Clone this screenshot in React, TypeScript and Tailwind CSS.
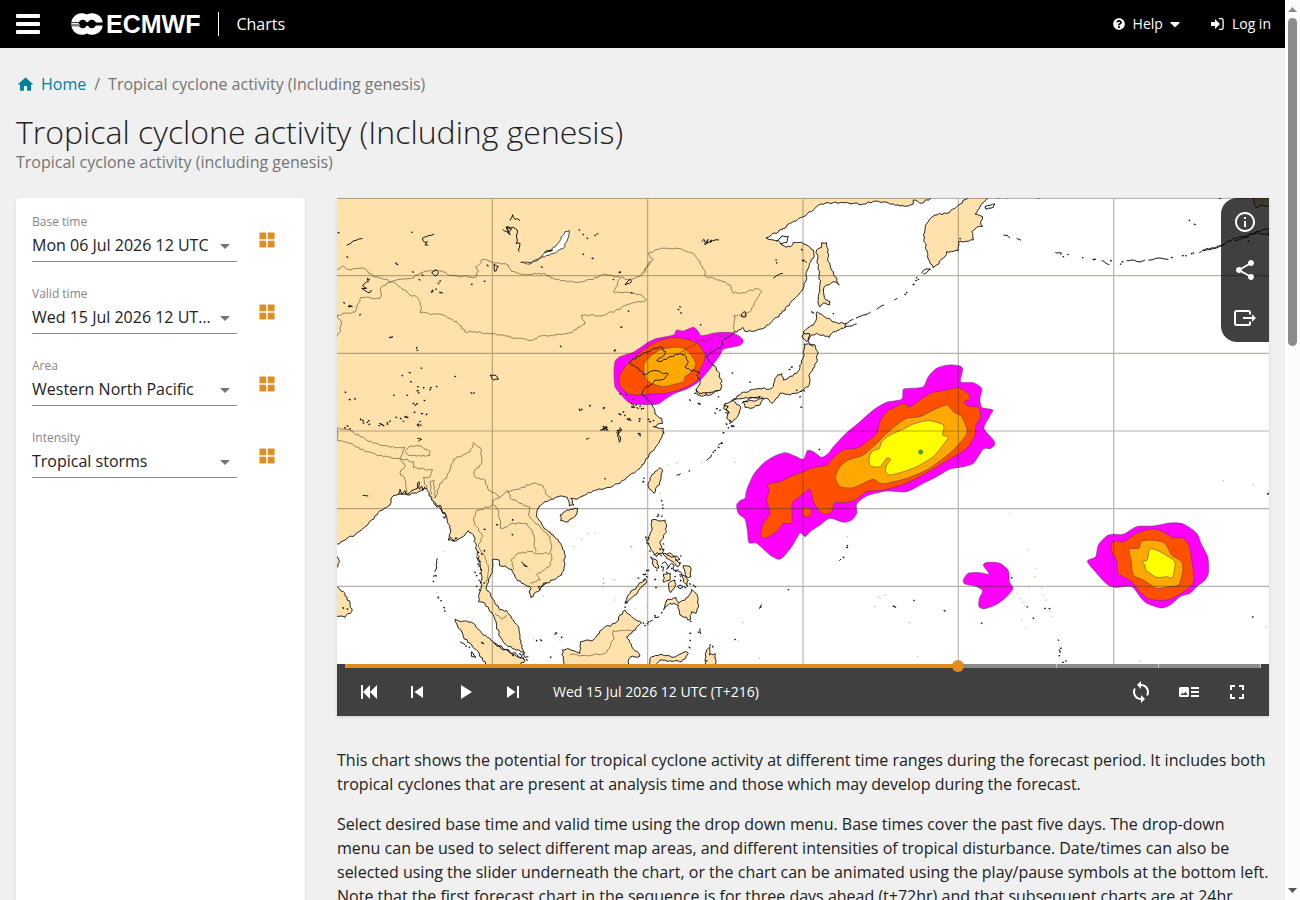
import { useState, type ReactNode } from 'react';
import {
  MdFullscreen,
  MdHome,
  MdInfoOutline,
  MdPlayArrow,
  MdShare,
  MdSkipNext,
  MdSkipPrevious,
  MdSync,
} from 'react-icons/md';
import { FaCaretDown, FaQuestionCircle } from 'react-icons/fa';

/* ---------- Map geometry ---------- */

type Point = [number, number];

// Map sheets: each coordinate list is relative to the origin of its sheet.
const NW: Point = [-21, -24];
const N: Point = [789, -24];
const SW: Point = [-21, 666];
const S: Point = [789, 666];
const NE: Point = [1719, -24];
const SE: Point = [1809, 846];
const MID: Point = [1149, 456];

const pts = (origin: Point, list: string): Point[] =>
  list
    .trim()
    .split(/\s+/)
    .map((pair) => {
      const [x, y] = pair.split(',').map(Number);
      return [x + origin[0], y + origin[1]];
    });

const noise = (x: number, y: number) => {
  const v = Math.sin(x * 12.9898 + y * 78.233) * 43758.5453;
  return (v - Math.floor(v)) * 2 - 1;
};

// Builds an irregular coast-like path through the given points.
const trace = (points: Point[], amp: number, closed: boolean) => {
  const out: string[] = [];
  const last = closed ? points.length : points.length - 1;
  for (let i = 0; i < last; i++) {
    const [x1, y1] = points[i];
    const [x2, y2] = points[(i + 1) % points.length];
    const len = Math.hypot(x2 - x1, y2 - y1) || 1;
    const steps = Math.max(1, Math.round(len / 7));
    const straight = len > 700;
    for (let k = 0; k < (straight ? 1 : steps); k++) {
      const t = k / steps;
      const off = k === 0 || straight ? 0 : noise(x1 + k * 3, y1 + k * 7) * amp;
      const x = x1 + (x2 - x1) * t - ((y2 - y1) / len) * off;
      const y = y1 + (y2 - y1) * t + ((x2 - x1) / len) * off;
      out.push(`${x.toFixed(1)} ${y.toFixed(1)}`);
    }
  }
  if (!closed) out.push(points[points.length - 1].join(' '));
  return `M${out.join('L')}${closed ? 'Z' : ''}`;
};

// Smooth closed outline through the given points.
const smooth = (p: Point[]) => {
  const n = p.length;
  let d = `M${p[0].join(' ')}`;
  for (let i = 0; i < n; i++) {
    const a = p[(i + n - 1) % n];
    const b = p[i];
    const c = p[(i + 1) % n];
    const e = p[(i + 2) % n];
    d += `C${b[0] + (c[0] - a[0]) / 8} ${b[1] + (c[1] - a[1]) / 8} ${c[0] - (e[0] - b[0]) / 8} ${c[1] - (e[1] - b[1]) / 8} ${c[0]} ${c[1]}`;
  }
  return `${d}Z`;
};

const coast: Point[] = [
  ...pts(NE, '62,24 35,40 10,30'),
  ...pts(
    N,
    '940,42 925,48 900,48 880,42 850,36 820,34 790,42 750,41 700,38 662,42 640,60 610,80 575,98 545,118 515,134 498,143 520,150 535,152 545,165 558,172 572,170 580,157 605,157 620,165 640,180 640,205 628,220 622,240 620,262 612,290 595,315 570,340 545,370 515,395 490,415 460,424 435,424 428,412 415,420 400,430 385,440 370,450 365,468 330,490 318,500 335,520 355,545 365,575 362,600 340,610 310,618 292,615 288,600 298,585 300,570 290,555 295,545 270,540 255,530 265,515 258,500 240,490 210,500 180,515 170,512 190,498 197,485 180,470 160,475 130,490 95,512 88,520 115,535 130,555 150,545 165,542 205,552 195,565 170,570 150,585 130,600 125,612 145,630 158,650 165,672 185,685 188,700 160,710 190,715 192,730',
  ),
  ...pts(S, '190,35 180,60 165,85'),
  ...pts(
    SW,
    '957,105 945,125 930,145 900,165 870,190 830,203 800,210 770,222 735,237 722,235 732,255 718,258 712,232 690,228 665,238 645,245 625,265 620,290 640,320 670,345 692,370 703,400 703,440 695,465 670,480 645,492 630,510 602,532 600,500 575,490 555,470 545,448 525,438 508,436 507,420 488,418 488,455 475,480 468,505 482,520 495,550 510,570 530,572 550,600 567,625 570,650 572,670 585,700 560,690 530,675 510,650 500,620 492,590 480,575 465,550 445,545 450,515 455,480 450,430 440,390 432,350 415,332 405,345 380,362 355,360 362,330 350,290 330,265 305,240 290,205 265,215 240,225 210,222 185,232 180,255 150,272 125,300 100,325 75,345 45,360 22,372',
  ),
];
const mainland: Point[] = [[-20, -20], [1781, -20], ...coast, [-20, 1038]];

const islands: Point[][] = [
  pts(N, '650,180 665,172 665,158 680,158 685,180 683,205 695,240 718,285 700,275 680,285 670,300 678,330 690,335 688,345 672,338 658,350 655,320 660,280 655,230 652,210'),
  pts(N, '652,365 680,385 710,398 740,400 730,415 700,425 688,442 650,430 630,440 620,455 608,445 610,425 640,405 650,385'),
  pts(N, '612,462 645,465 655,490 645,530 630,550 625,590 600,605 570,615 540,610 515,640 500,625 475,620 430,625 395,632 425,608 470,597 515,595 530,560 545,550 550,570 590,550 605,520 612,480'),
  pts(N, '430,635 455,632 492,626 480,645 450,655 435,652'),
  pts(N, '375,640 400,632 422,650 415,675 395,698 380,685 385,665 370,655'),
  pts(NE, '175,20 140,50 110,70 75,75 50,100 40,135 50,180 60,220 70,234 105,200 110,185 145,182 145,155 190,150 185,125 200,112 218,110 212,95 218,80 195,72 210,50 235,20'),
  pts(NE, '1030,20 1090,20 1090,52 1060,46 1040,54 1032,40'),
  pts(S, '165,155 180,143 188,150 182,180 163,220 145,200 150,175'),
  pts(SW, '690,285 710,270 742,265 738,285 715,305 692,302'),
  pts(S, '155,300 195,300 200,335 180,365 190,395 170,410 140,370 150,345 155,320'),
  pts(S, '152,410 172,425 175,445 160,435'),
  pts(S, '188,400 215,402 240,430 235,440 200,415'),
  pts(S, '250,437 270,440 273,470 258,470'),
  pts(S, '190,462 212,460 210,480 192,488'),
  pts(S, '205,490 225,480 225,500 212,518'),
  pts(S, '247,465 265,480 262,500 250,485'),
  pts(S, '190,570 200,540 228,533 235,550 265,530 275,508 292,525 296,560 288,580 275,575 270,600 240,585 235,555 210,550'),
  pts(S, '75,550 85,525 135,475 140,485 105,525'),
  pts(SW, '697,690 720,688 750,700 752,665 790,660 820,625 855,610 885,570 905,590 935,608 905,640 890,650 905,680 930,708 900,712 890,745 700,745'),
  pts(S, '145,745 150,715 180,703 220,712 260,695 265,700 245,725 180,720 160,745'),
  pts(S, '315,735 320,690 330,680 328,705 345,700 345,735'),
  pts(SW, '375,598 430,610 460,645 490,665 530,690 560,710 585,720 560,745 475,745 440,690 400,650'),
  pts(SW, '10,500 28,506 40,515 60,550 65,575 45,592 15,588'),
  pts(SW, '15,400 22,410 29,425 24,440 15,445'),
];

const lake = pts(NW, '572,217 600,218 635,200 645,185 665,178 685,160 705,125 718,122 712,150 700,175 670,190 630,205 600,222');

const borders: Point[][] = [
  pts(NW, '21,238 40,228 60,240 100,235 130,258 160,268 185,275 210,268 245,265 270,250 300,240 340,245 360,257 400,258 435,262 445,245 437,230 460,208 500,218 535,225 545,245 580,252 640,250 670,265 700,272 740,277 790,268 820,252 850,258 900,268 935,255 960,215'),
  pts(N, '130,250 160,208 145,190 175,178 230,175 280,190 300,215 320,262 360,270 390,285 400,310 440,306 470,296 486,305 470,330 455,360 430,378 402,376 402,400 405,425 395,432'),
  pts(NW, '21,376 50,370 75,367 92,322 150,325 155,290 185,275 200,283 235,310 265,325 275,350 270,368 340,375 380,395 405,425 490,430 540,440 600,451 640,437 710,432 740,418 765,402 755,375 810,378 870,358 890,345 930,335 950,330 935,315 900,308 870,308 850,305 870,265'),
  pts(NW, '21,376 35,400 27,430 21,440'),
  pts(SW, '21,25 60,30 90,50 130,70 180,82 225,82 210,115 160,110 110,95 60,70 21,60 21,25'),
  pts(SW, '225,95 240,78 270,78 300,95 300,106 260,108 235,106 225,95'),
  pts(SW, '212,115 250,125 250,142 308,150 300,170 280,172 290,205'),
  pts(SW, '212,115 225,140 210,158 225,180 230,220'),
  pts(SW, '305,240 300,185 312,180 315,235 330,190 350,175 370,118 420,95 430,68 455,90 455,130 432,155 435,170 465,180 475,210 510,232 490,240 488,255 440,272 430,300 440,320 458,350 445,375 465,410 475,440 468,490'),
  pts(SW, '510,232 530,215 560,208 610,190 640,198 650,225 665,238'),
  pts(SW, '530,210 545,238 570,250 600,262 595,285 630,320 660,350 665,380 660,400 620,400 600,395 560,402 543,420 550,450'),
  pts(SW, '490,255 505,270 512,325 550,310 590,310 608,335 618,395'),
  pts(SW, '663,400 662,435 620,465 630,480 600,490'),
  pts(SW, '495,580 515,598 530,585'),
  pts(SW, '720,705 770,707 825,700 850,660 850,632 905,632'),
  pts(N, '240,490 300,450 320,455 355,432 365,440 385,432'),
];

const squiggles: Point[][] = [
  pts(NW, '518,118 530,125 540,135 530,110 545,118 535,128 528,112 550,112 562,120 560,135 562,150 558,160 570,160 565,180 568,185'),
  pts(NW, '540,92 548,74 555,88 562,86 570,92'),
  pts(NW, '50,165 75,152 97,146'),
  pts(NW, '312,132 290,140 277,145 285,158 292,155 285,165 295,165'),
  pts(NW, '120,270 112,265 115,275 105,280 98,286 110,295 95,295 106,302 120,308 125,300'),
  pts(NW, '305,248 318,240 325,250 315,258 305,248'),
  pts(NW, '495,245 492,222 505,230 497,245'),
  pts(NW, '480,555 495,555 505,568 490,570 480,555'),
  pts(NW, '885,285 905,275 900,268 885,285'),
  pts(NW, '645,188 668,180 655,184'),
  pts(N, '305,155 312,148 315,165 325,148 322,160 335,150 330,158 345,150 357,150'),
  pts(N, '520,265 535,255 548,250'),
  pts(N, '425,372 435,365 438,380 425,380 425,372'),
  pts(N, '530,155 545,138 565,140 560,158 540,160'),
  pts(N, '735,402 760,388'),
  pts(N, '768,384 790,375 812,366'),
  pts(N, '830,358 852,345'),
  pts(N, '735,412 770,402'),
  pts(N, '883,330 892,325'),
  pts(N, '612,430 630,432 625,455 640,470'),
  pts(N, '370,645 385,650 378,660 388,668 375,668'),
  pts(N, '425,640 450,625 480,622'),
  pts(N, '288,600 300,612 320,608 340,606 355,602'),
  pts(NE, '225,50 255,42 250,52 228,58 225,50'),
  pts(NE, '280,135 292,136 300,144'),
  pts(NE, '320,146 333,151'),
  pts(NE, '436,188 455,190 450,194'),
  pts(NE, '650,212 665,210 680,214 690,216 705,210'),
  pts(NE, '715,210 745,204 775,208'),
  pts(NE, '868,188 890,175 900,180 915,175 925,168 945,162 925,172 900,176 880,182'),
  pts(NE, '945,158 975,145 1010,138 1040,125 1077,115 1077,135 1040,128 1010,142 975,152'),
  pts(NE, '575,212 598,224'),
  pts(NE, '35,250 45,238 62,238 40,252'),
  pts(SW, '322,415 320,440 314,455'),
  pts(SW, '390,665 405,675'),
  pts(SW, '425,695 438,712 425,710 425,695'),
  pts(SW, '575,425 592,440 580,435'),
  pts(SW, '262,55 275,58 265,64'),
  pts(SW, '98,226 115,228'),
  pts(S, '320,122 332,112 335,104'),
  pts(S, '355,75 368,70'),
  pts(S, '230,165 242,161'),
  pts(S, '478,566 485,553'),
  pts(S, '718,422 723,417'),
  pts(S, '300,625 302,642'),
  pts(S, '150,605 158,600'),
  pts(S, '163,592 178,590'),
  pts(S, '185,432 195,425 205,440 200,448 215,430 222,438 220,450 235,450 225,455'),
  pts(S, '190,440 188,455'),
  pts(S, '232,500 240,506 250,500 240,495 232,500'),
  pts(S, '200,405 215,412 230,408 240,418 225,420'),
  pts(S, '235,455 246,460 242,472'),
  pts(S, '160,405 172,398 186,408'),
  pts(S, '55,40 65,28 50,38 62,55 57,68'),
  pts(S, '0,30 12,26 20,20 14,32 10,28'),
  pts(SW, '815,30 828,20 835,32'),
  pts(SW, '860,32 870,30 862,48 870,65'),
  pts(SW, '768,58 778,54'),
  pts(SW, '490,668 500,678 510,680 520,690 530,688 545,700 555,698 570,715 580,700 585,712 595,710'),
  pts(SW, '440,410 446,425'),
  pts(SW, '205,222 210,208 215,222 225,212 228,222 240,218 250,210 262,205 262,190 267,185 268,208 275,198 278,212 285,200'),
  pts(SW, '310,245 322,262 330,255 338,280 345,278 345,295 338,290'),
  pts(SW, '355,360 362,352 370,364 378,352 385,360'),
  pts(SW, '630,510 625,500 638,498 640,490 650,488'),
];

// Centres of small lakes and islets.
const specks: Point[] = [
  ...pts(NW, '25,128 245,126 52,199 198,218 202,222 472,224 248,246 268,268 277,253 425,284 463,274 330,275 325,278 308,300 318,296 305,304 330,306 335,310 42,337 60,345 64,350 56,348 90,376 186,443 180,444 260,472 262,480 692,467 853,482 875,412 895,362 635,229 760,191 787,207 772,143 802,133 748,121 795,135 760,132 238,547 274,535 217,558 242,574 264,590 262,604 266,610 281,593 302,595 320,588 231,615 192,615 300,600 375,560 424,607 432,608 46,605 58,629 75,625 250,642 260,642 255,645 283,632 253,667 275,672 92,686 98,690 116,692 118,705 150,700 153,703 172,698 180,695 198,680 212,684 225,680 232,684 228,678 220,694 262,705 272,704 266,708 290,675 155,704 45,712 60,715 748,658 755,656 750,662 780,645 820,653 868,670 880,668 892,686 905,640 912,650 918,645 908,652 935,655 898,685 928,688 825,712 820,708 830,715 870,715 850,268 870,245 905,308'),
  ...pts(N, '63,413 85,362 235,357 240,350 243,367 302,404 58,246 40,268 45,482 528,210 530,220 605,177 608,210 618,216 612,213 60,613 78,615 100,628 95,650 100,646 108,645 112,652 120,650 130,655 12,655 62,672 75,678 85,688 90,690 118,692 145,688 148,694 150,695 160,690 10,715 15,712 20,718 55,722 118,730 270,628 295,642 300,644 285,610 318,610 355,622 450,578 397,548 568,538 575,533 635,365 640,370 590,600 603,605 603,650 700,372 360,662 350,658 345,668 385,715 395,708 390,700 400,706 600,622 612,600 370,730 365,760 355,770 915,312 920,308 940,285 948,272 955,270 950,265'),
  ...pts(NE, '838,90 853,102 518,203 474,194 460,200 550,210 555,208 603,210 632,224 637,216 785,204 818,198 828,196 845,190 850,188 292,24 385,24 265,24 930,26 150,145 1015,155'),
  ...pts(SW, '100,10 112,8 160,15 172,12 265,12 270,5 52,17 147,17 825,175 845,5 925,42 930,45 940,185 547,342 548,298 463,328 500,315 463,390 318,465 312,470 310,485 325,530 333,542 342,562 344,572 435,455 440,468 445,430 450,460 448,440 452,450 455,400 462,490 440,500 448,508 447,480 452,485 450,425 445,395 620,660 632,658 678,637 675,642 695,650 662,710 570,700 580,712 590,718 548,705 535,690 460,670 455,668 40,562 52,565 408,680 418,682 948,350 955,370 950,450 940,462 950,470 925,475 890,545 885,560 940,610 955,605'),
  ...pts(S, '120,40 132,175 130,187 185,240 188,255 188,265 175,282 172,290 185,290 268,153 345,92 340,98 380,10 395,20 390,5 742,376 740,382 730,410 658,90 565,510 482,560 885,560 942,541 880,560 405,660 272,605 270,640 270,660 268,680 338,678 330,675 320,725 295,635 145,352 140,360 150,395 145,450 135,465 130,480 165,480 168,500 135,618 142,610 165,585 185,580 215,445 225,470 200,455 240,465 242,480 270,490 280,495 285,500 170,450 185,440 180,385 190,390 242,408 240,430 255,500 190,372'),
  ...pts(SE, '215,292 262,380 280,413 315,386 328,387 13,391 125,428 355,480 358,510 362,505 360,518 358,528 368,546 378,544 938,412 985,41 983,44'),
];

// Barely visible reefs and atolls.
const reefs: Point[] = [
  ...pts(SW, '775,340 795,340 755,358 730,380 902,380 320,518 340,395 820,475 850,478 822,490 818,500 600,450 640,528 855,540 950,560 610,655 690,660'),
  ...pts(S, '180,220 205,135 230,130 305,128 405,128 665,100 640,155 742,310 742,350 730,250 430,608 835,530 840,535 825,560 928,608 953,710 415,663 478,715 105,565 95,380 45,480 10,490 855,525'),
  ...pts(SE, '210,102 265,211 290,265 285,290 268,322 255,378 335,410 245,420 258,445 978,441 940,14 600,545 310,345 305,325 232,340 240,355 248,368 330,395 318,360 850,2'),
];

const speckPath = specks
  .map(([x, y]) => {
    const a = noise(x, y) * 3;
    const b = noise(y, x) * 3;
    return `M${x - 2} ${y}l3 ${a.toFixed(1)}l${b.toFixed(1)} 2`;
  })
  .join('');

const reefPath = reefs.map(([x, y]) => `M${x - 2} ${y}h4`).join('');

const MAGENTA = '#ff00ff';
const RED = '#ff5000';
const AMBER = '#ffa800';
const YELLOW = '#ffff00';

const contours: { fill: string; points: Point[] }[] = [
  {
    fill: MAGENTA,
    points: pts(N, '45,515 60,500 100,487 140,460 165,447 220,435 230,420 250,423 280,412 295,425 305,437 350,428 395,428 420,440 430,453 420,466 395,472 370,478 360,495 335,530 310,560 290,580 260,597 225,610 195,628 170,643 100,642 80,632 60,610 45,590 42,550'),
  },
  {
    fill: RED,
    points: pts(N, '58,560 75,530 100,505 130,480 160,460 195,447 230,443 270,450 295,462 305,475 315,495 310,520 298,545 300,560 280,580 245,597 205,608 150,612 100,615 75,605 60,585'),
  },
  {
    fill: AMBER,
    points: pts(N, '133,520 150,500 175,482 200,475 240,472 265,485 280,505 287,525 270,550 255,560 250,575 215,585 190,590 160,582 140,570 132,545'),
  },
  {
    fill: MAGENTA,
    points: pts(MID, '50,465 60,452 75,445 80,420 100,375 130,340 160,320 195,308 225,318 250,328 262,302 280,305 305,322 325,310 340,290 380,248 420,215 460,180 500,157 545,148 550,118 575,115 610,110 625,80 650,55 685,45 720,48 728,60 722,95 760,98 785,115 780,145 785,172 818,180 808,200 792,235 820,270 824,285 810,296 790,297 760,340 730,350 690,357 650,380 610,400 560,425 500,423 440,438 410,462 410,490 395,510 370,517 330,505 300,525 270,545 255,560 240,550 215,590 190,620 175,628 150,615 110,580 87,578 82,540 75,508 55,490'),
  },
  {
    fill: RED,
    points: pts(MID, '150,400 180,395 210,380 250,365 285,352 320,345 345,318 375,298 410,295 440,275 470,250 480,215 500,185 525,172 550,160 570,170 600,150 635,128 680,120 715,113 745,130 750,148 733,155 745,168 775,172 782,200 768,225 765,255 745,290 710,315 660,345 600,380 545,405 490,420 440,425 405,450 375,458 345,458 335,485 318,493 300,485 280,455 270,418 240,440 217,460 215,518 190,520 170,545 135,565 122,555 130,520 150,490 140,450 148,420 142,408'),
  },
  {
    fill: AMBER,
    points: pts(MID, '347,378 360,350 385,330 430,315 470,280 500,250 530,225 560,205 600,200 640,180 680,165 700,185 725,200 740,235 738,255 710,290 670,325 620,360 560,385 500,400 480,400 460,388 430,400 400,413 365,412 350,395'),
  },
  {
    fill: YELLOW,
    points: pts(MID, '447,330 455,305 478,295 485,275 510,255 550,238 580,222 625,212 670,225 668,255 685,262 665,290 640,320 590,350 550,365 510,375 497,365 500,345 512,328 500,325 480,350 452,348'),
  },
  { fill: RED, points: pts(MID, '246,487 252,474 262,471 272,476 275,488 268,499 255,500') },
  {
    fill: MAGENTA,
    points: pts(SE, '70,300 85,280 120,278 147,282 130,255 145,247 180,250 205,272 208,305 219,325 200,350 170,373 135,386 117,380 118,355 128,332 105,318 75,312'),
  },
  {
    fill: MAGENTA,
    points: pts(SE, '442,244 467,230 475,195 500,168 520,163 550,163 590,140 640,138 690,129 730,132 770,160 785,195 803,230 806,275 795,300 770,320 750,340 720,350 690,375 663,384 620,370 600,350 575,320 525,322 500,312 470,280'),
  },
  {
    fill: RED,
    points: pts(SE, '515,190 530,182 550,186 590,160 635,147 670,155 695,172 730,175 748,200 755,240 762,300 745,325 715,345 680,360 630,358 600,335 575,305 535,280 530,240 515,215'),
  },
  {
    fill: AMBER,
    points: pts(SE, '568,207 597,205 605,183 640,181 675,190 695,225 725,245 728,275 715,315 685,320 650,325 610,300 580,285 573,240'),
  },
  {
    fill: YELLOW,
    points: pts(SE, '605,245 622,240 630,207 660,215 700,240 705,255 697,293 680,290 650,292 618,270 615,255'),
  },
];

const mainlandPath = trace(mainland, 3, true);
const coastPath = trace(coast, 3, false);
const islandPath = islands.map((p) => trace(p, 3, true)).join('');
const borderPath = borders.map((p) => trace(p, 3, false)).join('');
const squigglePath = squiggles.map((p) => trace(p, 2, false)).join('');

function CycloneMap() {
  return (
    <svg viewBox="0 0 2796 1398" className="block w-full bg-white" role="img" aria-label="Tropical cyclone activity map">
      <g fill="#ffe2ab">
        <path d={mainlandPath} />
        <path d={islandPath} stroke="#222" strokeWidth="3" />
      </g>
      <path d={trace(lake, 2, true)} fill="#fff" stroke="#444" strokeWidth="3" />
      {contours.map((c, i) => (
        <path key={i} d={smooth(c.points)} fill={c.fill} stroke="#5b3060" strokeOpacity="0.7" strokeWidth="2.2" />
      ))}
      <circle cx="1751" cy="762" r="6" fill="#14c814" stroke="#333" strokeWidth="1.5" />
      <g fill="none" strokeLinejoin="round">
        <path d={borderPath} stroke="#5c4a2e" strokeOpacity="0.8" strokeWidth="2.4" />
        <path d={coastPath} stroke="#222" strokeWidth="3" />
        <path d={squigglePath} stroke="#111" strokeWidth="3" />
        <path d={speckPath} stroke="#111" strokeWidth="3.5" />
        <path d={reefPath} stroke="#222" strokeOpacity="0.5" strokeWidth="2" />
        <path
          d="M0 1H2796M0 233H2796M0 466H2796M0 699H2796M0 932H2796M0 1165H2796M466 0V1398M932 0V1398M1398 0V1398M1864 0V1398M2330 0V1398"
          stroke="#2a2010"
          strokeOpacity="0.34"
          strokeWidth="3.5"
        />
      </g>
    </svg>
  );
}

/* ---------- Icons ---------- */

function LogoMark() {
  return (
    <svg width="32" height="22" viewBox="0 0 32 22" aria-hidden="true">
      <path
        fill="#fff"
        d="M10.800.2C12.800.2 14.600.8 16 1.600 17.400.8 19.200.2 21.200.2c4.700 0 8.700 3 10.200 7.200v7.200c-1.500 4.200-5.500 7.200-10.200 7.200-2 0-3.800-.6-5.200-1.400-1.400.8-3.200 1.400-5.200 1.400C4.900 21.800.2 17 .2 11S4.900.2 10.800.2z"
      />
      <g fill="#000">
        <circle cx="11.800" cy="11" r="4.200" />
        <circle cx="20.800" cy="11" r="4.200" />
        <path d="M15 9.200h3v3.600h-3zM23 9.500h9v3h-9zM0 9.200h9v.9H0zM0 12.400h9v.9H0z" />
      </g>
      <path fill="#fff" d="M14.300 5.500h3.600L16.100 9zM14.300 16.500h3.600L16.100 13z" />
      <path fill="#888" d="M0 10.900h9v1.500H0z" />
    </svg>
  );
}

function SignInIcon() {
  return (
    <svg width="13" height="12" viewBox="0 0 13 12" aria-hidden="true">
      <path fill="#fff" d="M0 3.900h4V1l5 5-5 5V8.100H0z" />
      <path fill="none" stroke="#fff" strokeWidth="1.300" d="M8 .7h2.500q1.600 0 1.600 1.600v7.400q0 1.600-1.600 1.600H8" />
    </svg>
  );
}

function GridIcon() {
  return (
    <svg width="16" height="16" viewBox="0 0 16 16" fill="#e08d22" aria-hidden="true">
      <path d="M.5.5h6.700v6.700H.5zM8.800.5h6.700v6.700H8.800zM.5 8.800h6.700v6.700H.5zM8.800 8.800h6.700v6.700H8.800z" />
    </svg>
  );
}

function FirstIcon() {
  return (
    <svg width="24" height="24" viewBox="0 0 24 24" fill="currentColor" aria-hidden="true">
      <path d="M4 5h2v14H4zM13 5v14l-7-7zM20 5v14l-7-7z" />
    </svg>
  );
}

function LegendIcon() {
  return (
    <svg width="24" height="24" viewBox="0 0 24 24" fill="currentColor" aria-hidden="true">
      <path fillRule="evenodd" d="M3.500 7h7A1.500 1.500 0 0 1 12 8.500v7a1.500 1.500 0 0 1-1.500 1.500h-7A1.500 1.500 0 0 1 2 15.500v-7A1.500 1.500 0 0 1 3.500 7zM3.500 15h7.200L8.500 11.800l-1.700 2.100-1.200-1.300z" />
      <path d="M14 7h8v2h-8zM14 11h8v2h-8zM14 15h8v2h-8z" />
    </svg>
  );
}

function ExportIcon() {
  return (
    <svg width="24" height="24" viewBox="0 0 24 24" fill="none" stroke="currentColor" strokeWidth="2" aria-hidden="true">
      <path d="M17 8.500V6.500Q17 5 15.500 5h-12Q2 5 2 6.500v11Q2 19 3.500 19h12q1.500 0 1.500-1.500v-2" />
      <path d="M10 12h10" />
      <path fill="currentColor" stroke="none" d="M19 8.200 23 12l-4 3.800z" />
    </svg>
  );
}

/* ---------- Page ---------- */

function Header() {
  return (
    <header className="flex h-12 items-center bg-black px-4 text-white">
      <button type="button" aria-label="Menu" className="flex w-6 flex-col gap-1">
        <span className="h-1 w-full rounded-[1px] bg-white" />
        <span className="h-1 w-full rounded-[1px] bg-white" />
        <span className="h-1 w-full rounded-[1px] bg-white" />
      </button>
      <a href="#" className="ml-[31px] flex items-center gap-[3px]">
        <LogoMark />
        <span className="font-['Liberation_Sans',sans-serif] text-[25px] leading-6 font-bold">ECMWF</span>
      </a>
      <span className="ml-[18px] h-6 w-px bg-white" />
      <a href="#" className="ml-[17px] text-base">
        Charts
      </a>
      <nav className="-mr-0.5 ml-auto flex items-center gap-7 text-sm">
        <button type="button" className="flex items-center gap-2">
          <FaQuestionCircle size={12} />
          <span className="flex items-center gap-1">
            Help <FaCaretDown size={16} />
          </span>
        </button>
        <a href="#" className="flex items-center gap-2">
          <SignInIcon />
          Log in
        </a>
      </nav>
    </header>
  );
}

const fields = [
  { id: 'base-time', label: 'Base time', value: 'Mon 06 Jul 2026 12 UTC' },
  { id: 'valid-time', label: 'Valid time', value: 'Wed 15 Jul 2026 12 UTC (T+216)' },
  { id: 'area', label: 'Area', value: 'Western North Pacific' },
  { id: 'intensity', label: 'Intensity', value: 'Tropical storms' },
];

function Filters() {
  return (
    <form className="flex w-[289px] shrink-0 flex-col gap-6 rounded bg-white p-4 shadow-sm">
      {fields.map((f) => (
        <div key={f.id} className="flex items-center gap-[22px]">
          <div className="relative w-[205px]">
            <label htmlFor={f.id} className="block text-xs leading-4 text-[#858585]">
              {f.label}
            </label>
            <select
              id={f.id}
              className="block h-8 w-full appearance-none truncate border-b border-[#8c8c8c] bg-transparent pr-[26px] pb-0.5 text-base text-[#212121] outline-none"
            >
              <option>{f.value}</option>
            </select>
            <svg width="10" height="5" viewBox="0 0 10 5" className="pointer-events-none absolute right-[7px] bottom-[13px]" aria-hidden="true">
              <path d="M0 0h10L5 5z" fill="#757575" />
            </svg>
          </div>
          <button type="button" aria-label={`${f.label} overview`} className="pt-1">
            <GridIcon />
          </button>
        </div>
      ))}
    </form>
  );
}

function IconButton({ label, children }: { label: string; children: ReactNode }) {
  return (
    <button type="button" aria-label={label} className="flex size-12 items-center justify-center text-white">
      {children}
    </button>
  );
}

const LAST_STEP = 9;

function Player() {
  const [step, setStep] = useState(6);
  return (
    <div className="bg-[#404040]">
      <div className="relative mx-2">
        <div className="flex h-1 bg-[#e08d22] pl-1.5">
          {Array.from({ length: LAST_STEP }, (_, i) => (
            <span
              key={i}
              className={i < step ? 'flex-1 bg-[#e08d22]' : 'flex-1 border-r border-[#c8c8c8] bg-[#8c8c8c]'}
            />
          ))}
        </div>
        <input
          type="range"
          aria-label="Forecast step"
          min={0}
          max={LAST_STEP}
          value={step}
          onChange={(e) => setStep(Number(e.target.value))}
          className="absolute -top-1 -right-1.5 left-0 h-3 appearance-none bg-transparent [&::-webkit-slider-thumb]:size-3 [&::-webkit-slider-thumb]:appearance-none [&::-webkit-slider-thumb]:rounded-full [&::-webkit-slider-thumb]:bg-[#e08d22]"
        />
      </div>
      <div className="flex items-center px-2">
        <IconButton label="First"><FirstIcon /></IconButton>
        <IconButton label="Previous"><MdSkipPrevious size={24} /></IconButton>
        <IconButton label="Play"><MdPlayArrow size={24} /></IconButton>
        <IconButton label="Next"><MdSkipNext size={24} /></IconButton>
        <span className="ml-4 text-sm text-white">Wed 15 Jul 2026 12 UTC (T+216)</span>
        <div className="ml-auto flex">
          <IconButton label="Loop"><MdSync size={24} /></IconButton>
          <IconButton label="Legend"><LegendIcon /></IconButton>
          <IconButton label="Fullscreen"><MdFullscreen size={24} /></IconButton>
        </div>
      </div>
    </div>
  );
}

export default function App() {
  return (
    <div className="flex h-screen overflow-hidden bg-[#f0f0f0] font-['Open_Sans',sans-serif] text-[#212121]">
      <div className="min-w-0 flex-1">
        <Header />
        <div className="px-4 pt-6">
          <nav aria-label="Breadcrumb" className="flex items-center text-base leading-6 text-[#757575]">
            <a href="#" className="flex items-center gap-1.5 text-[#00819b]">
              <MdHome size={19} />
              Home
            </a>
            <span className="px-2">/</span>
            <span>Tropical cyclone activity (Including genesis)</span>
          </nav>
          <h1 className="mt-4 text-[32px] leading-10 font-light">Tropical cyclone activity (Including genesis)</h1>
          <p className="text-base leading-5 text-[#757575]">Tropical cyclone activity (including genesis)</p>
          <div className="mt-[26px] flex gap-8">
            <Filters />
            <main className="min-w-0 flex-1">
              <div className="relative shadow">
                <CycloneMap />
                <div className="absolute top-0 right-0 rounded-l-2xl bg-black/75">
                  <IconButton label="Information"><MdInfoOutline size={24} /></IconButton>
                  <IconButton label="Share"><MdShare size={24} /></IconButton>
                  <IconButton label="Export"><ExportIcon /></IconButton>
                </div>
                <Player />
              </div>
              <div className="mt-8 flex flex-col gap-4 text-base leading-6">
                <p>
                  This chart shows the potential for tropical cyclone activity at different time ranges during the
                  forecast period. It includes both tropical cyclones that are present at analysis time and those which
                  may develop during the forecast.
                </p>
                <p>
                  Select desired base time and valid time using the drop down menu. Base times cover the past five days.
                  The drop-down menu can be used to select different map areas, and different intensities of tropical
                  disturbance. Date/times can also be selected using the slider underneath the chart, or the chart can
                  be animated using the play/pause symbols at the bottom left. Note that the first forecast chart in the
                  sequence is for three days ahead (t+72hr) and that subsequent charts are at 24hr
                </p>
              </div>
            </main>
          </div>
        </div>
      </div>
      <div className="flex w-[15px] shrink-0 flex-col items-center bg-[#fcfcfc] py-[7px]" aria-hidden="true">
        <svg width="9" height="5" viewBox="0 0 9 5" className="shrink-0">
          <path d="M0 5h9L4.500 0z" fill="#8b8b8b" />
        </svg>
        <div className="mt-1.5 h-[328px] w-[9px] rounded-full bg-[#8b8b8b]" />
        <svg width="9" height="5" viewBox="0 0 9 5" className="mt-auto shrink-0">
          <path d="M0 0h9L4.500 5z" fill="#555" />
        </svg>
      </div>
    </div>
  );
}
